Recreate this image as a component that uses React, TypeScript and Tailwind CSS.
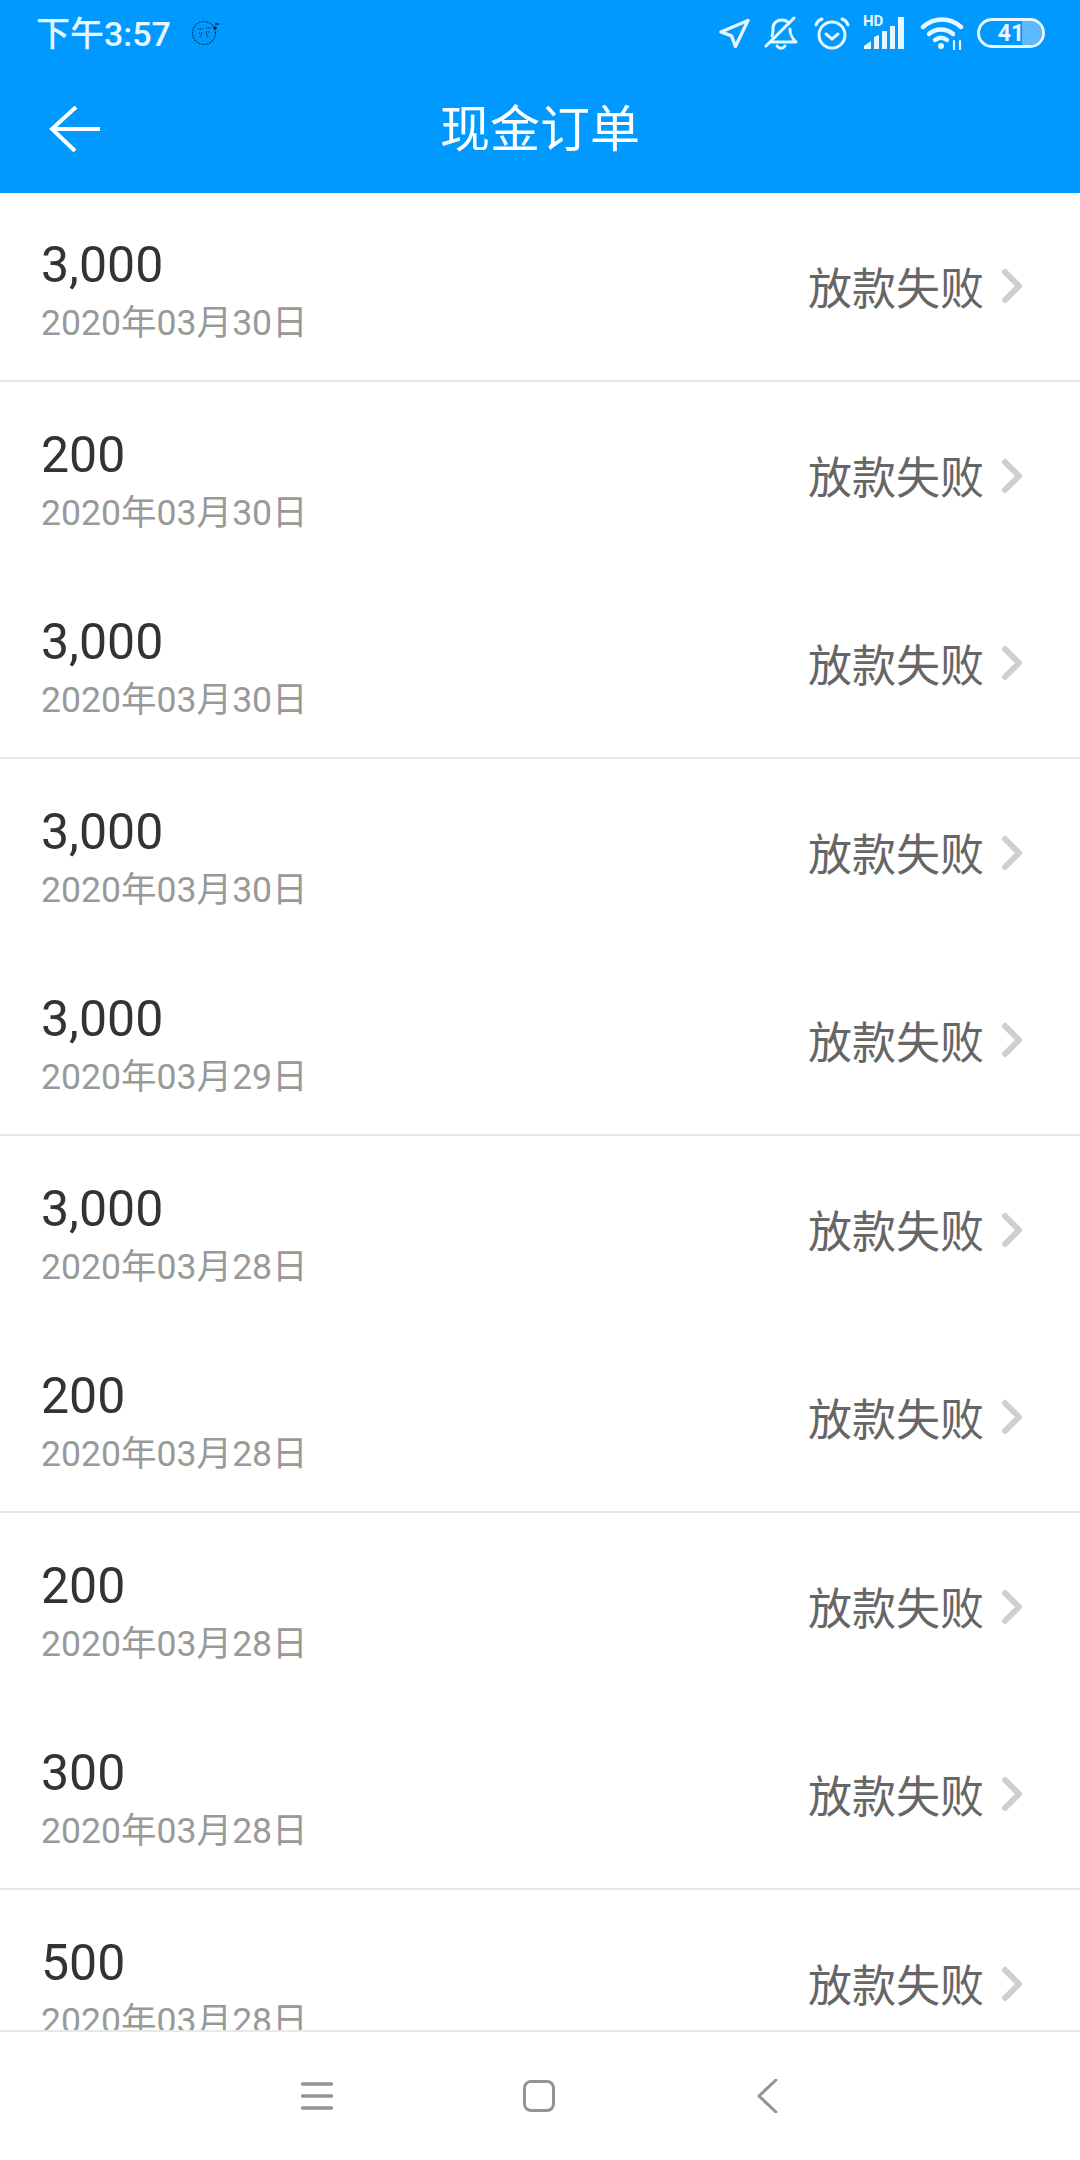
import React from 'react';

const orders = [
  { amount: '3,000', date: '2020年03月30日', line: true },
  { amount: '200', date: '2020年03月30日', line: false },
  { amount: '3,000', date: '2020年03月30日', line: true },
  { amount: '3,000', date: '2020年03月30日', line: false },
  { amount: '3,000', date: '2020年03月29日', line: true },
  { amount: '3,000', date: '2020年03月28日', line: false },
  { amount: '200', date: '2020年03月28日', line: true },
  { amount: '200', date: '2020年03月28日', line: false },
  { amount: '300', date: '2020年03月28日', line: true },
  { amount: '500', date: '2020年03月28日', line: false },
];

function StatusIcons() {
  return (
    <div className="flex items-center text-[#e6f7ff]">
      {/* location */}
      <svg width="31" height="32" viewBox="0 0 32 32" fill="none" stroke="currentColor" strokeWidth="3.4" strokeLinejoin="round" className="mr-[14px]">
        <path d="M30 3 2 15l11 4 4 11z" />
      </svg>
      {/* muted bell */}
      <svg width="34" height="34" viewBox="0 0 34 34" fill="none" stroke="currentColor" strokeWidth="3" strokeLinecap="round" strokeLinejoin="round" className="mr-[16px]">
        <path d="M8 20c1-2 1-5 1-8 0-5 4-8 9-8 3 0 5 1 7 3" />
        <path d="M26 13c0 5 1 8 6 13H7" />
        <path d="M30 2 2 30" />
        <path d="M13 30c2 3 6 3 8 0" />
      </svg>
      {/* alarm */}
      <svg width="36" height="34" viewBox="0 0 36 34" fill="none" stroke="currentColor" strokeWidth="3" strokeLinecap="round" strokeLinejoin="round" className="mr-[13px]">
        <circle cx="18" cy="19" r="13" />
        <path d="m12 18 6 5 6-5" />
        <path d="M2 9c1-3 3-5 6-6M34 9c-1-3-3-5-6-6" />
      </svg>
      {/* HD signal */}
      <div className="relative w-[44px] h-[34px] mr-[13px]">
        <span className="absolute left-0 top-[-4px] text-[15px] leading-[18px] font-bold">HD</span>
        <svg width="44" height="34" viewBox="0 0 44 34" fill="currentColor" className="absolute left-0 top-0">
          <path d="M1 33v-3l7-5v8zM11 33V21l5-2v14zM19 33V15h5v18zM27 33V10h5v23zM35 33V1h6v32z" />
        </svg>
      </div>
      {/* wifi */}
      <svg width="44" height="34" viewBox="0 0 44 34" fill="none" stroke="currentColor" strokeWidth="4.4" strokeLinecap="round" className="mr-[13px]">
        <path d="M3 11c11-10 27-10 38 0" />
        <path d="M9 18c7-6 17-6 24 0" />
        <path d="M15 24c4-3 8-3 12 0" />
        <circle cx="21" cy="30" r="3" fill="currentColor" stroke="none" />
        <path d="M34 25v8M40 25v8" strokeWidth="2.2" />
      </svg>
      {/* battery */}
      <div className="relative w-[68px] h-[30px] rounded-[15px] border-[3px] border-[#e6f7ff] overflow-hidden flex items-center justify-center">
        <div className="absolute right-0 top-0 bottom-0 w-[20px] bg-[#5cb9ff]" />
        <span className="relative text-[23px] leading-none font-bold">41</span>
      </div>
    </div>
  );
}

export default function App() {
  return (
    <div className="w-[1080px] h-[2160px] flex flex-col bg-white overflow-hidden font-['Roboto','Noto_Sans_CJK_SC',sans-serif]">
      <header className="h-[193px] shrink-0 bg-[#0099ff]">
        <div className="h-[66px] flex items-center justify-between pl-[36px] pr-[35px]">
          <div className="flex items-center">
            <span className="text-[34px] pt-[2px] font-medium text-[#e6f7ff]">下午3:57</span>
            <svg width="28" height="28" viewBox="0 0 28 28" fill="none" stroke="#0d2a55" className="ml-[21px]">
              <circle cx="12" cy="14" r="11.5" strokeWidth="1.2" strokeDasharray="1.5 1.2" />
              <path d="M6 10h5M14 9h5M7 14h4M14 13h4M8 18l2-3M16 18l-2-4" strokeWidth="1.2" strokeDasharray="1.2 .8" />
              <path d="M23 5h4" strokeWidth="1.5" />
              <circle cx="23" cy="9" r="1.8" fill="#0d2a55" stroke="none" />
            </svg>
          </div>
          <StatusIcons />
        </div>
        <div className="h-[127px] flex items-center">
          <div className="w-[150px] pl-[49px] pb-[2px]">
            <svg width="52" height="46" viewBox="0 0 52 46" fill="none" stroke="white" strokeWidth="4" className="block">
              <path d="M51 23H3" />
              <path d="M27 1 3 23l23 22" />
            </svg>
          </div>
          <h1 className="flex-1 text-center text-[50px] leading-[60px] font-normal text-white">现金订单</h1>
          <div className="w-[150px]" />
        </div>
      </header>

      <main className="flex-1 overflow-hidden">
        {orders.map((order, index) => (
          <div
            key={index}
            className={`h-[188.5px] flex items-center justify-between pl-[41px] pr-[57px] ${order.line ? 'border-b-2 border-[#e8e8e8]' : ''}`}
          >
            <div className="pt-[14px]">
              <div className="text-[50px] leading-[60px] text-[#333333]">{order.amount}</div>
              <div className="text-[35.6px] leading-[56px] text-[#999999]">{order.date}</div>
            </div>
            <div className="flex items-center">
              <span className="text-[44px] pt-[7px] -ml-[2px] text-[#666666]">放款失败</span>
              <svg width="22" height="36" viewBox="0 0 22 36" fill="none" stroke="#cfcfcf" strokeWidth="6" strokeLinecap="round" strokeLinejoin="round" className="ml-[17px]">
                <path d="m4 4 14 14L4 32" />
              </svg>
            </div>
          </div>
        ))}
      </main>

      <nav className="h-[130px] shrink-0 bg-white border-t-2 border-[#e8e8e8] flex items-center pl-[301px] text-[#949494]">
        <svg width="32" height="30" viewBox="0 0 32 30" fill="none" stroke="currentColor" strokeWidth="3.4" strokeLinecap="round">
          <path d="M1.5 3h29M1.5 15h29M1.5 27h29" />
        </svg>
        <div className="ml-[190px] w-[32px] h-[32px] rounded-[8px] border-[3px] border-[#949494]" />
        <svg width="22" height="34" viewBox="0 0 22 34" fill="none" stroke="currentColor" strokeWidth="3" strokeLinecap="round" strokeLinejoin="round" className="ml-[201px]">
          <path d="M20 1 3 17l17 16" />
        </svg>
      </nav>
    </div>
  );
}
